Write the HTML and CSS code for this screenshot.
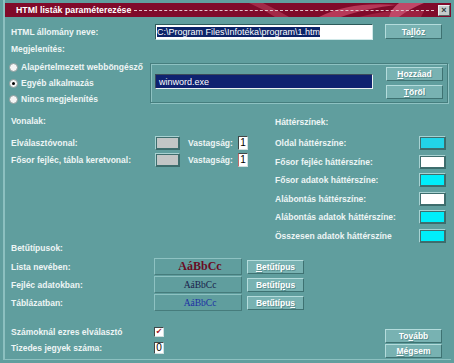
FILE: index.html
```html
<!DOCTYPE html>
<html lang="hu">
<head>
    <meta charset="UTF-8">
    <title>HTML listák paraméterezése</title>
    <link rel="stylesheet" href="styles.css">
</head>
<body>
<div class="window">
    <div class="titlebar">
        <svg class="titleart" width="190" height="14" viewBox="0 0 190 14">
            <path d="M0 0 L14 0 Q30 8 40 14 L26 14 Q14 6 0 0 Z" fill="#a22a48"/>
            <path d="M70 14 Q100 -2 150 2 L165 0 Q120 4 92 14 Z" fill="#b63858"/>
            <path d="M110 14 Q140 6 175 8 L172 14 Z" fill="#9c2040"/>
            <path d="M150 0 L175 0 Q160 6 150 14 L140 14 Q142 6 150 0 Z" fill="#c04868"/>
        </svg>
        <span class="title">HTMl listák paraméterezése</span>
        <span class="dots"></span>
        <span class="close">&times;</span>
    </div>

    <div class="content">
        <div class="row file-row">
            <span class="lbl">HTML állomány neve:</span>
            <div class="field file-field"><span class="sel">C:\Program Files\Infotéka\program\1.htm</span></div>
            <button class="btn browse">Ta<u>l</u>lóz</button>
        </div>
        <div class="heading show-heading">Megjelenítés:</div>

        <div class="display">
            <div class="radios">
                <div class="radio"><span class="dot"></span>Alapértelmezett webböngésző</div>
                <div class="radio"><span class="dot on"></span>Egyéb alkalmazás</div>
                <div class="radio last"><span class="dot"></span>Nincs megjelenítés</div>
            </div>
            <div class="groupbox">
                <div class="field app-field">winword.exe</div>
                <div class="btn-col">
                    <button class="btn small"><u>H</u>ozzáad</button>
                    <button class="btn small"><u>T</u>öröl</button>
                </div>
            </div>
        </div>

        <div class="middle">
            <div class="lines">
                <div class="heading">Vonalak:</div>
                <div class="line-row">
                    <span class="lbl">Elválasztóvonal:</span>
                    <span class="swatch line-swatch"></span>
                    <span class="thick">Vastagság:</span>
                    <span class="num">1</span>
                </div>
                <div class="line-row">
                    <span class="lbl">Fősor fejléc, tábla keretvonal:</span>
                    <span class="swatch line-swatch"></span>
                    <span class="thick">Vastagság:</span>
                    <span class="num red">1</span>
                </div>
            </div>
            <div class="colors">
                <div class="heading">Háttérszínek:</div>
                <div class="color-row"><span class="clbl">Oldal háttérszíne:</span><span class="swatch c-page"></span></div>
                <div class="color-row"><span class="clbl">Fősor fejléc háttérszíne:</span><span class="swatch c-white"></span></div>
                <div class="color-row"><span class="clbl">Fősor adatok háttérszíne:</span><span class="swatch c-cyan"></span></div>
                <div class="color-row"><span class="clbl">Alábontás háttérszíne:</span><span class="swatch c-white"></span></div>
                <div class="color-row"><span class="clbl">Alábontás adatok háttérszíne:</span><span class="swatch c-cyan"></span></div>
                <div class="color-row"><span class="clbl">Összesen adatok háttérszíne</span><span class="swatch c-cyan"></span></div>
            </div>
        </div>

        <div class="fonts">
            <div class="heading">Betűtípusok:</div>
            <div class="font-row first">
                <span class="lbl">Lista nevében:</span>
                <span class="sample s1">AáBbCc</span>
                <button class="btn font-btn"><u>B</u>etűtípus</button>
            </div>
            <div class="font-row">
                <span class="lbl">Fejléc adatokban:</span>
                <span class="sample s2">AáBbCc</span>
                <button class="btn font-btn">Betűtí<u>p</u>us</button>
            </div>
            <div class="font-row">
                <span class="lbl">Táblázatban:</span>
                <span class="sample s3">AáBbCc</span>
                <button class="btn font-btn">Betűtípu<u>s</u></button>
            </div>
        </div>

        <div class="bottom">
            <div class="options">
                <div class="opt-row check-row">
                    <span class="lbl">Számoknál ezres elválasztó</span>
                    <span class="check">&#10004;</span>
                </div>
                <div class="opt-row dec-row">
                    <span class="lbl">Tizedes jegyek száma:</span>
                    <span class="num dec">0</span>
                </div>
            </div>
            <div class="btn-col end">
                <button class="btn wide">To<u>v</u>ább</button>
                <button class="btn wide"><u>M</u>égsem</button>
            </div>
        </div>
    </div>
</div>
</body>
</html>
```

FILE: styles.css
```css
body {
    margin: 0;
    background: #609e9e;
    font-family: "Liberation Sans", Arial, sans-serif;
    font-size: 8.5px;
    font-weight: bold;
    color: #eef5f5;
}
.window {
    margin: 0 3px;
    height: 360px;
    box-sizing: border-box;
    padding-top: 3px;
    border-left: 2px solid #8cc0c0;
    border-bottom: 1px solid #8cc0c0;
}

/* title bar */
.titlebar {
    position: relative;
    display: flex;
    align-items: center;
    height: 14px;
    background: #800a2a;
    color: #ffffff;
    font-size: 8.8px;
    overflow: hidden;
}
.titleart {
    position: absolute;
    right: 12px;
    top: 0;
}
.title {
    position: relative;
    margin-left: 11px;
}
.dots {
    position: relative;
    flex: 1;
    margin: 1px 4px 0 3px;
    border-top: 1px dashed #e6c4ce;
}
.close {
    position: relative;
    width: 10px;
    height: 9px;
    margin-right: 1px;
    background: #c6cccc;
    border: 1px solid;
    border-color: #eef2f2 #5a6464 #5a6464 #eef2f2;
    color: #303838;
    font-size: 9px;
    line-height: 9px;
    text-align: center;
}

.content {
    padding-left: 6px;
}
.row, .line-row, .color-row, .font-row, .opt-row {
    display: flex;
    align-items: center;
}
.lbl {
    width: 144px;
    flex: none;
}
.heading {
    height: 12px;
    line-height: 12px;
}

/* inputs and buttons */
.field {
    box-sizing: border-box;
    height: 16px;
    border: 1px solid;
    border-color: #2c5a5a #d0e8e8 #d0e8e8 #2c5a5a;
    font-weight: normal;
    font-size: 9px;
    line-height: 14px;
    padding-left: 1px;
    white-space: nowrap;
    overflow: hidden;
}
.btn {
    box-sizing: border-box;
    height: 15px;
    padding: 0;
    background: #78b2b2;
    border: 1px solid;
    border-color: #b4dcdc #3e7272 #3e7272 #b4dcdc;
    color: #ffffff;
    font-family: "Liberation Sans", Arial, sans-serif;
    font-size: 8.5px;
    font-weight: bold;
    text-shadow: 1px 1px 0 #5a8e8e;
}
.file-row {
    margin-top: 6px;
    height: 17px;
}
.file-field {
    width: 218px;
    background: #ffffff;
    color: #000000;
}
.sel {
    background: #0c2468;
    color: #ffffff;
}
.browse {
    width: 57px;
    margin-left: 12px;
}
.show-heading {
    margin-top: 3px;
}

/* display group */
.display {
    display: flex;
    margin-top: 6px;
}
.radios {
    width: 141px;
    margin-left: -2px;
}
.radio {
    display: flex;
    align-items: center;
    height: 12px;
    margin-bottom: 4px;
}
.radio.last {
    margin-top: 3px;
}
.dot {
    box-sizing: border-box;
    width: 9px;
    height: 9px;
    margin-right: 3px;
    border-radius: 50%;
    background: #f4f4f4;
    border: 1px solid #8a9a9a;
    display: flex;
    align-items: center;
    justify-content: center;
}
.dot.on::after {
    content: "";
    width: 3px;
    height: 3px;
    border-radius: 50%;
    background: #000000;
}
.groupbox {
    display: flex;
    align-items: center;
    box-sizing: border-box;
    width: 298px;
    height: 40px;
    margin-top: 2px;
    padding-left: 4px;
    border: 1px solid #467e7e;
    box-shadow: inset 1px 1px 0 #8ec2c2, 1px 1px 0 #8ec2c2;
}
.app-field {
    width: 218px;
    height: 15px;
    background: #0e2270;
    color: #ffffff;
    border-color: #3a4a5a #e8f0f0 #e8f0f0 #3a4a5a;
    padding-left: 3px;
    margin-top: -3px;
}
.btn-col {
    display: flex;
    flex-direction: column;
    gap: 4px;
    margin-left: 13px;
}
.btn.small {
    width: 57px;
    height: 14px;
}

/* lines and colours */
.middle {
    display: flex;
    margin-top: 6px;
    height: 128px;
}
.lines {
    width: 264px;
}
.line-row {
    height: 14px;
    margin-bottom: 3px;
}
.lines .heading {
    margin-bottom: 9px;
}
.swatch {
    box-sizing: border-box;
    height: 14px;
    border: 1px solid;
    border-color: #a8d2d2 #3c6c6c #3c6c6c #a8d2d2;
    box-shadow: inset 1px 1px 0 #3e6e6e, inset -1px -1px 0 #3e6e6e;
}
.line-swatch {
    width: 25px;
    background: #c2c6c6;
}
.thick {
    margin-left: 8px;
    width: 50px;
}
.num {
    box-sizing: border-box;
    width: 10px;
    height: 14px;
    background: #ffffff;
    border: 1px solid;
    border-color: #404848 #d0e0e0 #d0e0e0 #404848;
    color: #000000;
    font-weight: normal;
    font-size: 10px;
    line-height: 12px;
    text-align: center;
}
.num.red {
    border-left-color: #c06a6a;
}
.colors .heading {
    margin-top: 1px;
    margin-bottom: 8px;
}
.color-row {
    height: 14px;
    margin-bottom: 4.5px;
}
.clbl {
    width: 144px;
}
.colors .swatch {
    width: 27px;
}
.c-page { background: #22d4e8; }
.c-white { background: #ffffff; }
.c-cyan { background: #00eefa; }

/* fonts */
.fonts .heading {
    height: 10px;
    line-height: 10px;
    margin-bottom: 5px;
}
.font-row {
    height: 17px;
    margin-bottom: 1px;
}
.font-row .lbl {
    width: 143px;
}
.sample {
    box-sizing: border-box;
    width: 88px;
    height: 17px;
    display: flex;
    align-items: center;
    justify-content: center;
    border: 1px solid;
    border-color: #8ec2c2 #467c7c #467c7c #8ec2c2;
    font-family: "Liberation Serif", "Times New Roman", serif;
    font-weight: normal;
}
.s1 {
    color: #6a0c24;
    font-size: 12px;
    font-weight: bold;
    padding-left: 4px;
}
.s2 {
    color: #18204a;
    font-size: 9.5px;
    padding-left: 4px;
}
.s3 {
    color: #1c30a4;
    font-size: 9.5px;
    padding-left: 4px;
}
.font-btn {
    width: 57px;
    height: 14px;
    margin-left: 5px;
}

/* bottom */
.bottom {
    display: flex;
}
.options {
    width: 374px;
    padding-top: 14px;
}
.opt-row .lbl {
    width: 143px;
}
.check-row {
    height: 12px;
}
.check {
    box-sizing: border-box;
    width: 10px;
    height: 10px;
    background: #ffffff;
    border: 1px solid;
    border-color: #404848 #d0e0e0 #d0e0e0 #404848;
    color: #a01828;
    font-family: "DejaVu Sans", sans-serif;
    font-size: 8px;
    line-height: 8px;
    text-align: center;
}
.dec-row {
    height: 12px;
    margin-top: 4px;
}
.num.dec {
    height: 12px;
    line-height: 10px;
}
.btn-col.end {
    margin-left: 0;
    margin-top: 17px;
    gap: 1px;
}
.btn.wide {
    width: 57px;
    height: 14px;
}
```
